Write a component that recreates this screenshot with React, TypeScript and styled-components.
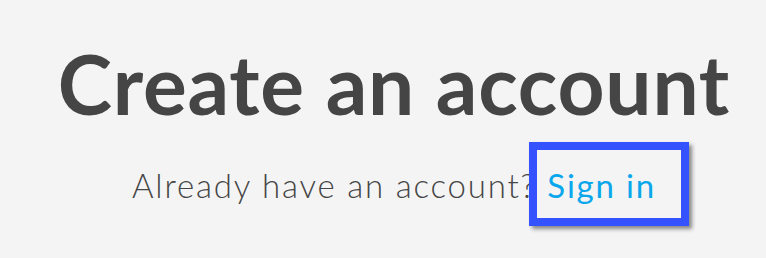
import styled, { createGlobalStyle } from 'styled-components';

const GlobalStyle = createGlobalStyle`
  html, body {
    margin: 0;
    background: #f4f4f4;
  }
`;

const Page = styled.main`
  display: flex;
  flex-direction: column;
  align-items: center;
  height: 258px;
  padding: 33px 0 0 22px;
  box-sizing: border-box;
  font-family: Lato, 'Liberation Sans', sans-serif;
  color: #454545;
  overflow: hidden;
`;

const Title = styled.h1`
  margin: 0;
  font-size: 82px;
  font-weight: 700;
  letter-spacing: 0.8px;
  line-height: 100px;
`;

const Prompt = styled.p`
  margin: 32px 0 0;
  font-size: 33px;
  font-weight: 300;
  letter-spacing: 1.8px;
  line-height: 40px;
`;

const SignIn = styled.a`
  position: relative;
  color: #0aa7ec;
  font-weight: 400;
  text-decoration: none;

  &::after {
    content: '';
    position: absolute;
    left: -18px;
    right: -33px;
    top: -23px;
    bottom: -21px;
    border: 8px solid #3452ff;
    box-shadow: 3px 3px 4px rgba(0, 0, 0, 0.45);
  }
`;

export default function App() {
  return (
    <>
      <GlobalStyle />
      <Page>
        <Title>Create an account</Title>
        <Prompt>
          Already have an account? <SignIn href="#">Sign in</SignIn>
        </Prompt>
      </Page>
    </>
  );
}
